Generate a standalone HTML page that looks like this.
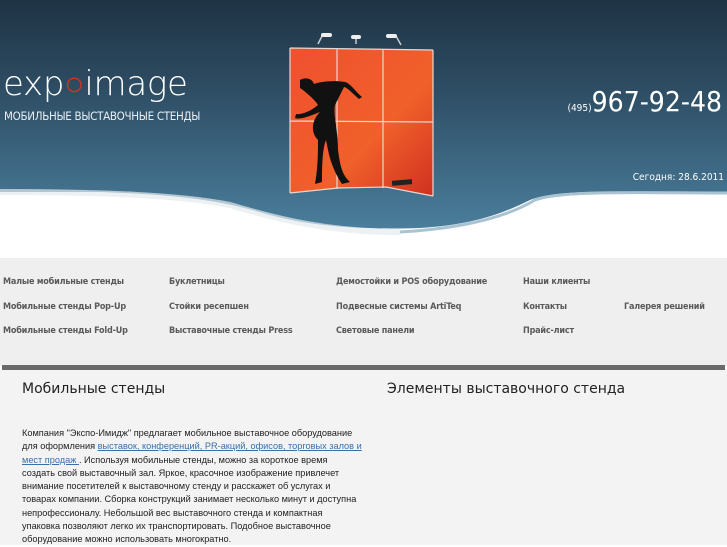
<!DOCTYPE html>
<html><head><meta charset="utf-8">
<style>
body{margin:0;width:727px;height:545px;overflow:hidden;background:#fff;font-family:"Liberation Sans","DejaVu Sans",sans-serif;position:relative}
.hdr{position:absolute;left:0;top:0;width:727px;height:260px}
.logo{position:absolute;left:3px;top:64px;color:#fff;font-size:34px;font-family:"DejaVu Sans","Liberation Sans",sans-serif;font-weight:300;letter-spacing:-0.3px}
.sub{position:absolute;left:4px;top:109px;color:#e8eef2;font-size:11.5px;font-family:"DejaVu Sans Condensed","DejaVu Sans",sans-serif;letter-spacing:-0.3px}
.phone{position:absolute;right:5px;top:85px;color:#fff;font-size:28px;font-family:"DejaVu Sans Condensed","DejaVu Sans",sans-serif}
.phone small{font-size:10px}
.date{position:absolute;right:3px;top:172px;color:#fff;font-size:10px;font-family:"DejaVu Sans Condensed",sans-serif}
.nav{position:absolute;left:0;top:258px;width:727px;height:108px;background:#efefef}
.nav a{position:absolute;font-size:9px;font-weight:bold;color:#5a5a5a;text-decoration:none;font-family:"DejaVu Sans Condensed","Liberation Sans",sans-serif;letter-spacing:-0.2px}
.bar{position:absolute;left:2px;top:365px;width:723px;height:5px;background:#6a6a6a}
.content{position:absolute;left:0;top:370px;width:727px;height:175px;background:#f3f3f3}
h2{position:absolute;margin:0;font-weight:normal;font-size:14px;color:#222;font-family:"DejaVu Sans","Liberation Sans",sans-serif}
.txt{position:absolute;left:22px;top:427px;width:340px;font-size:9.2px;line-height:13.3px;color:#222;font-family:"Liberation Sans",sans-serif}
.txt a{color:#3a6fa8}
</style></head><body>
<div class="hdr">
<svg width="727" height="260" viewBox="0 0 727 260">
<defs>
<linearGradient id="g" x1="0" y1="0" x2="0" y2="1">
<stop offset="0" stop-color="#1f3344"/><stop offset="0.35" stop-color="#2c4a60"/><stop offset="1" stop-color="#4a7e9c"/></linearGradient>
<linearGradient id="p" x1="0" y1="0" x2="1" y2="1"><stop offset="0" stop-color="#f05030"/><stop offset="0.6" stop-color="#f0602a"/><stop offset="1" stop-color="#d03020"/></linearGradient>
</defs>
<rect width="727" height="260" fill="#fff"/>
<path d="M0 0H727V193C640 192 560 188 530 200C500 215 470 225 420 228C360 230 310 226 270 215C220 200 180 195 100 192L0 192Z" fill="url(#g)"/>
<path d="M0 192C100 192 180 195 230 205C280 220 330 232 400 232" stroke="#e6ebee" stroke-width="6" fill="none" opacity="0.7"/>
<path d="M400 232C470 228 510 215 535 200C560 190 640 193 727 193" stroke="#a9c3d2" stroke-width="3" fill="none"/>
<path d="M290 48L433 50L433 196L386 187L338 188L290 193Z" fill="url(#p)"/>
<path d="M290 48L433 50M290 121L433 122M337 49V189M383 50V188M290 48V193M433 50V196M290 193L338 188L386 187L433 196" stroke="#e6d8d0" stroke-width="1.2" fill="none"/>
<path d="M300 80C305 77 312 78 314 84C320 82 332 80 345 82C350 83 356 92 362 97L359 99C352 93 348 88 344 87L335 105C333 115 338 130 338 150C340 165 342 175 350 182L342 184C334 172 330 160 328 150L326 140C322 150 322 170 322 182L315 184C318 168 318 150 318 140C310 132 312 120 320 112C310 116 300 120 295 118L296 114C300 115 310 112 318 105C315 100 306 92 300 88Z" fill="#111"/>
<path d="M318 44L322 36L330 36M356 44V36M401 45L396 36L390 36" stroke="#ccc" stroke-width="1.5" fill="none"/>
<rect x="321" y="33" width="11" height="4" rx="2" fill="#eee"/><rect x="351" y="35" width="10" height="4" rx="2" fill="#eee"/><rect x="386" y="34" width="11" height="4" rx="2" fill="#eee"/>
<rect x="392" y="180" width="20" height="5" fill="#222" transform="rotate(-5 402 182)"/>
</svg>
<div class="logo">exp<span style="color:#d8301c">&#x25CB;</span>image</div>
<div class="sub">МОБИЛЬНЫЕ ВЫСТАВОЧНЫЕ СТЕНДЫ</div>
<div class="phone"><small>(495)</small>967-92-48</div>
<div class="date">Сегодня: 28.6.2011</div>
</div>
<div class="nav">
<a style="left:3px;top:19px">Малые мобильные стенды</a>
<a style="left:169px;top:19px">Буклетницы</a>
<a style="left:336px;top:19px">Демостойки и POS оборудование</a>
<a style="left:523px;top:19px">Наши клиенты</a>
<a style="left:3px;top:44px">Мобильные стенды Pop-Up</a>
<a style="left:169px;top:44px">Стойки ресепшен</a>
<a style="left:336px;top:44px">Подвесные системы ArtiTeq</a>
<a style="left:523px;top:44px">Контакты</a>
<a style="left:624px;top:44px">Галерея решений</a>
<a style="left:3px;top:68px">Мобильные стенды Fold-Up</a>
<a style="left:169px;top:68px">Выставочные стенды Press</a>
<a style="left:336px;top:68px">Световые панели</a>
<a style="left:523px;top:68px">Прайс-лист</a>
</div>
<div class="bar"></div>
<div class="content"></div>
<h2 style="left:22px;top:381px">Мобильные стенды</h2>
<h2 style="left:387px;top:381px">Элементы выставочного стенда</h2>
<div class="txt">Компания "Экспо-Имидж" предлагает мобильное выставочное оборудование для оформления <a href="#">выставок, конференций, PR-акций, офисов, торговых залов и мест продаж </a>. Используя мобильные стенды, можно за короткое время создать свой выставочный зал. Яркое, красочное изображение привлечет внимание посетителей к выставочному стенду и расскажет об услугах и товарах компании. Сборка конструкций занимает несколько минут и доступна непрофессионалу. Небольшой вес выставочного стенда и компактная упаковка позволяют легко их транспортировать. Подобное выставочное оборудование можно использовать многократно.</div>
</body></html>
